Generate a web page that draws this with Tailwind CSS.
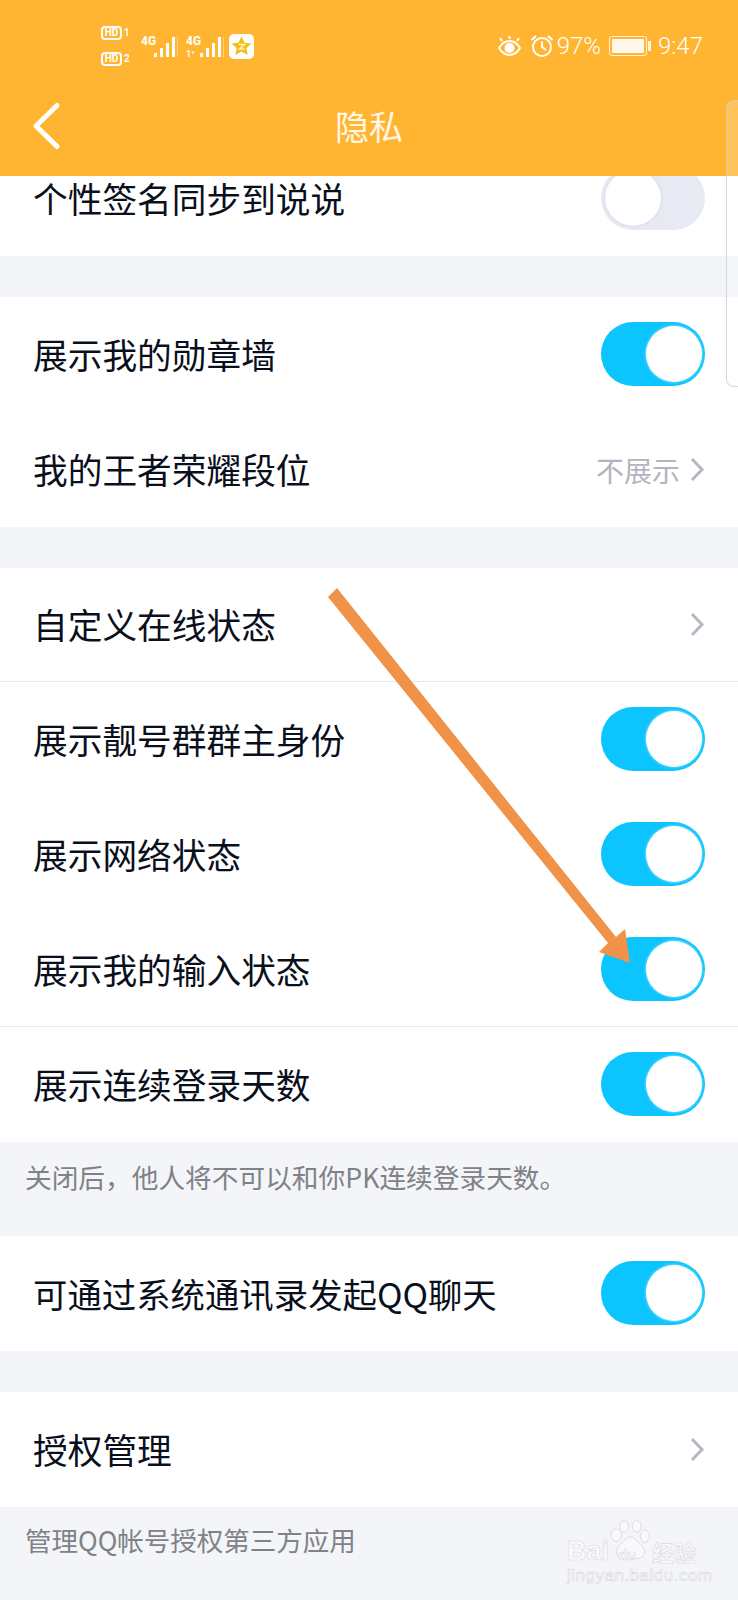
<!DOCTYPE html>
<html lang="zh">
<head>
  <meta charset="UTF-8" />
  <meta name="viewport" content="width=device-width, initial-scale=1.0"/>
  <title>隐私</title>
  <script src="https://cdn.jsdelivr.net/npm/@tailwindcss/browser@4"></script>
</head>
<body class="bg-[#f4f5f9] font-['Noto_Sans_CJK_SC','Noto_Sans',sans-serif]">
<div class="relative w-[738px] h-[1600px] overflow-hidden bg-[#f4f5f9]">

  <!-- header -->
  <header class="relative z-10 h-[176px] bg-[#ffb531] text-white">
    <div class="h-[92px] flex items-center justify-between pl-[101px] pr-[35px]">
      <div class="flex items-center">
        <div class="flex flex-col gap-[12px] w-[40px]">
          <div class="flex items-center gap-[2px]">
            <span class="w-[21px] h-[14px] rounded-[4px] border-2 border-white text-[10px] leading-[10px] font-bold text-center font-['Roboto',sans-serif]">HD</span>
            <span class="text-[10px] leading-[10px] font-bold font-['Roboto',sans-serif]">1</span>
          </div>
          <div class="flex items-center gap-[2px]">
            <span class="w-[21px] h-[14px] rounded-[4px] border-2 border-white text-[10px] leading-[10px] font-bold text-center font-['Roboto',sans-serif]">HD</span>
            <span class="text-[10px] leading-[10px] font-bold font-['Roboto',sans-serif]">2</span>
          </div>
        </div>
        <svg class="w-[37px] h-[24px]" viewBox="0 0 37 24" fill="#fff">
          <text x="0" y="11" font-family="Roboto" font-size="12" font-weight="700">4G</text>
          <rect x="13" y="19" width="3" height="4"/><rect x="19" y="14" width="3" height="9"/><rect x="25" y="9" width="3" height="14"/><rect x="31" y="3" width="3" height="20"/><rect x="36" y="3" width="1" height="20" opacity=".4"/>
        </svg>
        <svg class="w-[39px] h-[24px] ml-[8px]" viewBox="0 0 39 24" fill="#fff">
          <text x="0" y="11" font-family="Roboto" font-size="12" font-weight="700">4G</text>
          <text x="0" y="23" font-family="Roboto" font-size="9" font-weight="700">1⁺</text>
          <rect x="14" y="19" width="3" height="4"/><rect x="20" y="14" width="3" height="9"/><rect x="26" y="9" width="3" height="14"/><rect x="32" y="3" width="3" height="20"/><rect x="37" y="3" width="1" height="20" opacity=".4"/>
        </svg>
        <svg class="w-[25px] h-[25px] ml-[4px]" viewBox="0 0 25 25">
          <rect width="25" height="25" rx="5" fill="#fff"/>
          <path d="M12.500 2.500l3 6.300 6.800.8-5 4.700 1.400 6.700-6.200-3.400-6.200 3.400 1.400-6.700-5-4.700 6.800-.8z" fill="#f2bd14"/>
          <path d="M9.500 10.500h6l-5 4.500h5" fill="none" stroke="#fff3c4" stroke-width="1.500"/>
        </svg>
      </div>
      <div class="flex items-center">
        <svg class="w-[25px] h-[22px]" viewBox="0 0 25 22" fill="none" stroke="#fff" stroke-width="2">
          <path d="M2 13c3-5 6.500-7 10.500-7s7.500 2 10.500 7c-3 5-6.500 7-10.500 7S5 18 2 13z"/>
          <circle cx="12.500" cy="13" r="4" fill="#fff"/>
          <path d="M5 6L3 3M12.500 4V1M20 6l2-3"/>
        </svg>
        <svg class="w-[24px] h-[24px] ml-[8px]" viewBox="0 0 24 24" fill="none" stroke="#fff" stroke-width="2">
          <circle cx="12" cy="13" r="9"/>
          <path d="M12 7.500V13l4 3M1.500 6L6 2M22.500 6L18 2"/>
        </svg>
        <span class="ml-[3px] text-[24px] leading-none font-light font-['Roboto',sans-serif]">97%</span>
        <div class="ml-[8px] flex items-center">
          <div class="w-[38px] h-[20px] rounded-[3px] border border-white/80 p-[2px]"><div class="w-full h-full bg-[#fff8ea] rounded-[1px]"></div></div>
          <div class="w-[3px] h-[10px] bg-white/90 ml-[1px] rounded-r-[1px]"></div>
        </div>
        <span class="ml-[7px] text-[24px] leading-none font-light font-['Roboto',sans-serif]">9:47</span>
      </div>
    </div>
    <div class="relative flex items-center h-[68px]">
      <svg class="ml-[31px] w-[32px] h-[50px]" viewBox="0 0 32 50" fill="none" stroke="#fff" stroke-width="5" stroke-linecap="round" stroke-linejoin="round">
        <path d="M26 4.500L5 25l21 20.500"/>
      </svg>
      <h1 class="absolute inset-x-0 text-center text-[34px] leading-none font-normal text-[#fff6e6]">隐私</h1>
    </div>
  </header>

  <main class="text-[34.7px] leading-none text-[#0a0f1c]">
    <!-- first row sits partly under the header -->
    <section class="bg-white -mt-[35px]">
      <div class="h-[115px] flex items-center justify-between px-[33px]">
        <span>个性签名同步到说说</span>
        <div class="relative mb-[2px] w-[104px] h-[64px] rounded-full bg-[#e8eaf3]">
          <div class="absolute left-[4px] top-[4px] w-[56px] h-[56px] rounded-full bg-white shadow-[0_0_3px_#c9ccd8]"></div>
        </div>
      </div>
    </section>

    <section class="bg-white mt-[41px]">
      <div class="h-[115px] flex items-center justify-between px-[33px]">
        <span>展示我的勋章墙</span>
        <div class="relative mb-[2px] w-[104px] h-[64px] rounded-full bg-[#0cc4fe]">
          <div class="absolute right-[3px] top-[4px] w-[56px] h-[56px] rounded-full bg-white shadow-[0_0_3px_rgba(255,255,255,0.7)]"></div>
        </div>
      </div>
      <div class="h-[115px] flex items-center justify-between px-[33px]">
        <span>我的王者荣耀段位</span>
        <div class="flex items-center gap-[10px] text-[28px] text-[#b2b5bf]">
          <span>不展示</span>
          <svg class="w-[15px] h-[25px]" viewBox="0 0 15 25" fill="none" stroke="#b5b8c2" stroke-width="3"><path d="M2 2l10 10.500L2 23"/></svg>
        </div>
      </div>
    </section>

    <section class="bg-white mt-[41px]">
      <div class="h-[114px] flex items-center justify-between px-[33px] border-b border-[#e8e8ec]">
        <span>自定义在线状态</span>
        <svg class="w-[15px] h-[25px]" viewBox="0 0 15 25" fill="none" stroke="#b5b8c2" stroke-width="3"><path d="M2 2l10 10.500L2 23"/></svg>
      </div>
      <div class="h-[115px] flex items-center justify-between px-[33px]">
        <span>展示靓号群群主身份</span>
        <div class="relative mb-[2px] w-[104px] h-[64px] rounded-full bg-[#0cc4fe]">
          <div class="absolute right-[3px] top-[4px] w-[56px] h-[56px] rounded-full bg-white shadow-[0_0_3px_rgba(255,255,255,0.7)]"></div>
        </div>
      </div>
      <div class="h-[115px] flex items-center justify-between px-[33px]">
        <span>展示网络状态</span>
        <div class="relative mb-[2px] w-[104px] h-[64px] rounded-full bg-[#0cc4fe]">
          <div class="absolute right-[3px] top-[4px] w-[56px] h-[56px] rounded-full bg-white shadow-[0_0_3px_rgba(255,255,255,0.7)]"></div>
        </div>
      </div>
      <div class="h-[115px] flex items-center justify-between px-[33px] border-b border-[#e8e8ec]">
        <span>展示我的输入状态</span>
        <div class="relative w-[104px] h-[64px] rounded-full bg-[#0cc4fe]">
          <div class="absolute right-[3px] top-[4px] w-[56px] h-[56px] rounded-full bg-white shadow-[0_0_3px_rgba(255,255,255,0.7)]"></div>
        </div>
      </div>
      <div class="h-[115px] flex items-center justify-between px-[33px]">
        <span>展示连续登录天数</span>
        <div class="relative mb-[2px] w-[104px] h-[64px] rounded-full bg-[#0cc4fe]">
          <div class="absolute right-[3px] top-[4px] w-[56px] h-[56px] rounded-full bg-white shadow-[0_0_3px_rgba(255,255,255,0.7)]"></div>
        </div>
      </div>
    </section>

    <p class="h-[94px] pl-[25px] pt-[17px] text-[26.7px] leading-[36px] text-[#808287]">关闭后，他人将不可以和你PK连续登录天数。</p>

    <section class="bg-white">
      <div class="h-[115px] flex items-center justify-between px-[33px]">
        <span class="text-[34.4px]">可通过系统通讯录发起QQ聊天</span>
        <div class="relative mb-[2px] w-[104px] h-[64px] rounded-full bg-[#0cc4fe]">
          <div class="absolute right-[3px] top-[4px] w-[56px] h-[56px] rounded-full bg-white shadow-[0_0_3px_rgba(255,255,255,0.7)]"></div>
        </div>
      </div>
    </section>

    <section class="bg-white mt-[41px]">
      <div class="h-[115px] flex items-center justify-between px-[33px]">
        <span>授权管理</span>
        <svg class="w-[15px] h-[25px]" viewBox="0 0 15 25" fill="none" stroke="#b5b8c2" stroke-width="3"><path d="M2 2l10 10.500L2 23"/></svg>
      </div>
    </section>

    <p class="pl-[25px] pt-[15px] text-[26.5px] leading-[36px] text-[#808287]">管理QQ帐号授权第三方应用</p>
  </main>

  <!-- edge panel peeking in from the right -->
  <div class="absolute z-20 left-[726px] top-[100px] w-[20px] h-[287px] rounded-l-[8px] bg-white/20 border border-[#c9ccd4]/80"></div>

  <!-- annotation arrow -->
  <svg class="absolute z-30 left-0 top-0 w-[738px] h-[1600px] pointer-events-none" viewBox="0 0 738 1600">
    <path d="M328 597L337 588L616 937L625 929L630 963L599 952L608 943Z" fill="#f09348"/>
  </svg>

  <!-- watermark -->
  <div class="absolute z-20 left-[567px] top-[1520px] w-[140px] h-[66px] text-[#fafafc] [-webkit-text-stroke:0.6px_#d8d9e0]">
    <span class="absolute left-0 top-[18px] text-[27px] leading-[26px] font-bold font-['Liberation_Sans',sans-serif]">Bai</span>
    <svg class="absolute left-[43px] top-0 w-[41px] h-[43px]" viewBox="0 0 46 48" fill="#f9f9fc" stroke="#d8d9e0">
      <ellipse cx="7" cy="17" rx="6" ry="7"/><ellipse cx="16" cy="7" rx="5" ry="6.500"/><ellipse cx="30" cy="7" rx="5" ry="6.500"/><ellipse cx="39" cy="18" rx="5" ry="7"/>
      <path d="M23 19c5 0 8 6 13 10 5 5 3 14-5 14-3 0-5-1-8-1s-5 1-8 1c-8 0-10-9-5-14 5-4 8-10 13-10z"/>
    </svg>
    <span class="absolute left-[51px] top-[27px] text-[15px] leading-[15px] font-bold font-['Liberation_Sans',sans-serif]">du</span>
    <span class="absolute left-[85px] top-[18px] text-[22px] leading-[26px] font-bold">经验</span>
    <span class="absolute left-0 top-[47px] whitespace-nowrap text-[17px] leading-[18px] font-['Liberation_Sans',sans-serif] tracking-[0.5px]">jingyan.baidu.com</span>
  </div>
</div>
</body>
</html>
